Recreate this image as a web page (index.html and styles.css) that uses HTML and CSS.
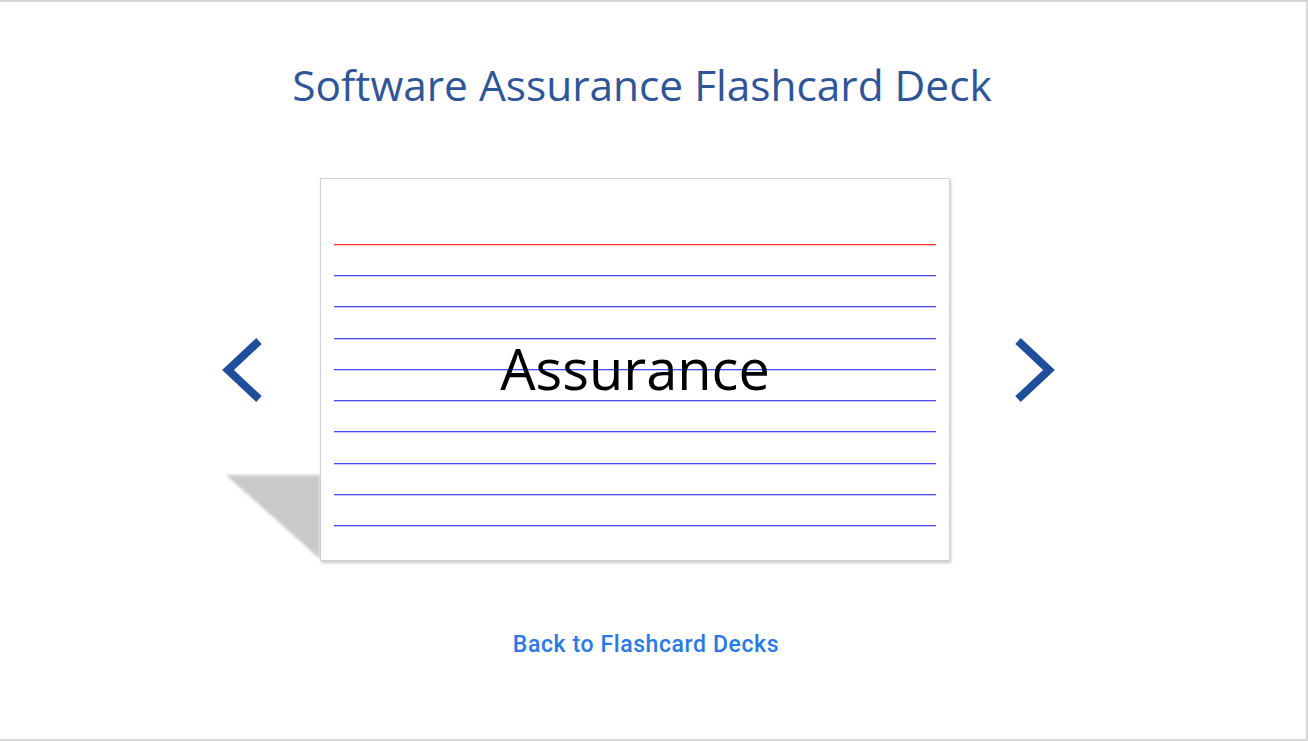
FILE: index.html
```html
<!DOCTYPE html>
<html lang="en">
<head>
<meta charset="utf-8">
<title>Software Assurance Flashcard Deck</title>
<link rel="stylesheet" href="styles.css">
</head>
<body>
<div class="frame">
  <h1 class="title">Software Assurance Flashcard Deck</h1>
  <div class="stage">
    <button class="nav nav-prev" aria-label="Previous card">
      <svg width="44" height="70" viewBox="0 0 44 70"><polyline points="39,6 8,35 39,64" fill="none" stroke="#1f4e9b" stroke-width="8" stroke-linejoin="miter"/></svg>
    </button>
    <div class="card">
      <svg class="card-shadow" width="110" height="100" viewBox="0 0 110 100">
        <defs><filter id="sb" x="-20%" y="-20%" width="140%" height="140%"><feGaussianBlur stdDeviation="1.6"/></filter></defs>
        <polygon points="10,6 104,6 104,90" fill="#c9c9c9" filter="url(#sb)"/>
      </svg>
      <div class="ruled">
        <div class="line red"></div>
        <div class="line"></div><div class="line"></div><div class="line step"></div>
        <div class="line"></div><div class="line"></div><div class="line"></div>
        <div class="line step"></div><div class="line"></div><div class="line"></div>
      </div>
      <div class="word">Assurance</div>
    </div>
    <button class="nav nav-next" aria-label="Next card">
      <svg width="44" height="70" viewBox="0 0 44 70"><polyline points="5,6 36,35 5,64" fill="none" stroke="#1f4e9b" stroke-width="8" stroke-linejoin="miter"/></svg>
    </button>
  </div>
  <div class="footer"><a class="back" href="#">Back to Flashcard Decks</a></div>
</div>
</body>
</html>
```
FILE: styles.css
```css
html, body { margin: 0; padding: 0; background: #fff; }
.frame {
  width: 1308px;
  height: 741px;
  box-sizing: border-box;
  border-top: 2px solid #d6d6d6;
  border-right: 2px solid #d6d6d6;
  border-bottom: 2px solid #d6d6d6;
  display: flex;
  flex-direction: column;
}
.title {
  margin: 55px 0 0 0;
  width: 1284px;
  text-align: center;
  font-family: "Open Sans", "Noto Sans", sans-serif;
  font-weight: 400;
  font-size: 42.4px;
  line-height: 56px;
  color: #2f5597;
}
.stage {
  margin-top: 65px;
  display: flex;
  align-items: center;
  padding-left: 220px;
}
.nav {
  border: 0;
  background: none;
  padding: 0;
  width: 44px;
  height: 70px;
  display: block;
  cursor: pointer;
}
.nav svg { display: block; }
.nav-prev { margin-right: 56px; }
.nav-next { margin-left: 63px; }
.card {
  position: relative;
  z-index: 0;
  width: 630px;
  height: 383px;
  box-sizing: border-box;
  border: 1px solid #d2d2d2;
  background: #fff;
  box-shadow: 1px 2px 3px rgba(0,0,0,0.22);
  display: grid;
}
.card-shadow {
  position: absolute;
  left: -105px;
  top: 290px;
  z-index: -1;
  display: block;
}
.ruled {
  grid-area: 1 / 1;
  margin: 0 13px;
  padding-top: 65px;
  display: flex;
  flex-direction: column;
  gap: 30px;
}
.line {
  height: 1px;
  background: #4a4af2;
  box-shadow: 0 1px 0 rgba(90, 90, 255, 0.35);
}
.line.step { margin-top: 1px; }
.line.red { background: #ff2e2e; box-shadow: 0 1px 0 rgba(255, 80, 80, 0.3); }
.word {
  grid-area: 1 / 1;
  align-self: center;
  justify-self: center;
  margin-left: 0;
  margin-top: -4px;
  font-family: "Open Sans", "Noto Sans", sans-serif;
  font-size: 56px;
  line-height: 1;
  color: #000;
}
.footer {
  margin-top: 71px;
  width: 1292px;
  text-align: center;
}
.back {
  font-family: Roboto, "Liberation Sans", sans-serif;
  font-weight: 500;
  font-size: 23px;
  letter-spacing: 0.6px;
  line-height: 26px;
  color: #2a78e4;
  text-decoration: none;
}
```
